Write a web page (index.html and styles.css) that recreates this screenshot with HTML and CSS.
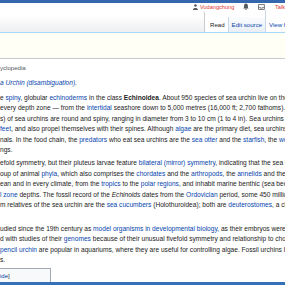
FILE: index.html
```html
<!DOCTYPE html>
<html lang="en">
<head>
    <meta charset="UTF-8">
    <meta name="viewport" content="width=device-width, initial-scale=1.0">
    <title>Sea urchin - Wikipedia</title>
    <link rel="stylesheet" href="styles.css">
</head>
<body>
    <div class="topbar"></div>

    <div class="header">
        <div class="usernav">
            <svg class="icon-user" width="5" height="6" viewBox="0 0 10 12">
                <circle cx="5" cy="3" r="2.6" fill="#54595d"/>
                <path d="M0 12 C0 7 10 7 10 12 Z" fill="#54595d"/>
            </svg>
            <a class="new username" href="#">Vudangchung</a>
            <svg class="icon-bell" width="6" height="7" viewBox="0 0 12 14">
                <path d="M6 1 C3 1 2 4 2 6 L2 9 L0.5 11 L11.5 11 L10 9 L10 6 C10 4 9 1 6 1 Z" fill="#54595d"/>
                <circle cx="6" cy="12.5" r="1.4" fill="#54595d"/>
            </svg>
            <svg class="icon-tray" width="7" height="6" viewBox="0 0 14 12">
                <path d="M1 1 L13 1 L13 11 L1 11 Z" fill="none" stroke="#54595d" stroke-width="1.6"/>
                <path d="M1 7 L5 7 L5 8.5 L9 8.5 L9 7 L13 7" fill="none" stroke="#54595d" stroke-width="1.4"/>
            </svg>
            <a class="new talk" href="#">Talk</a>
        </div>
        <div class="views">
            <div class="ns-box"></div>
            <div class="tab selected">Read</div>
            <div class="tab shaded"><a href="#">Edit source</a></div>
            <div class="tab"><a href="#">View history</a></div>
        </div>
    </div>

    <div class="title"></div>

    <div class="content">
        <div class="line sitesub">yclopedia</div>
        <div class="line hatnote"><a href="#">a Urchin (disambiguation)</a>.</div>

        <div class="para">
            <div class="line">e <a href="#">spiny</a>, globular <a href="#">echinoderms</a> in the class <b>Echinoidea</b>. About 950 species of sea urchin live on the seabed</div>
            <div class="line">every depth zone — from the <a href="#">intertidal</a> seashore down to 5,000 metres (16,000 ft; 2,700 fathoms).<sup><a href="#">[1]</a></sup> The</div>
            <div class="line">s) of sea urchins are round and spiny, ranging in diameter from 3 to 10 cm (1 to 4 in). Sea urchins move</div>
            <div class="line"><a href="#">feet</a>, and also propel themselves with their spines. Although <a href="#">algae</a> are the primary diet, sea urchins also</div>
            <div class="line">nals. In the food chain, the <a href="#">predators</a> who eat sea urchins are the <a href="#">sea otter</a> and the <a href="#">starfish</a>, the <a href="#">wolf eel</a></div>
            <div class="line">ngs.</div>
        </div>

        <div class="para">
            <div class="line">efold symmetry, but their pluteus larvae feature <a href="#">bilateral (mirror) symmetry</a>, indicating that the sea urchin</div>
            <div class="line">oup of animal <a href="#">phyla</a>, which also comprises the <a href="#">chordates</a> and the <a href="#">arthropods</a>, the <a href="#">annelids</a> and the <a href="#">molluscs</a></div>
            <div class="line">ean and in every climate, from the <a href="#">tropics</a> to the <a href="#">polar regions</a>, and inhabit marine benthic (sea bed) habitats</div>
            <div class="line"><a href="#">l zone</a> depths. The fossil record of the <i>Echinoids</i> dates from the <a href="#">Ordovician</a> period, some 450 million years</div>
            <div class="line">m relatives of the sea urchin are the <a href="#">sea cucumbers</a> (Holothuroidea); both are <a href="#">deuterostomes</a>, a clade</div>
            <div class="line">&nbsp;</div>
        </div>

        <div class="para">
            <div class="line">udied since the 19th century as <a href="#">model organisms in developmental biology</a>, as their embryos were easily</div>
            <div class="line">d with studies of their <a href="#">genomes</a> because of their unusual fivefold symmetry and relationship to chordates</div>
            <div class="line"><a href="#">pencil urchin</a> are popular in aquariums, where they are useful for controlling algae. Fossil urchins have</div>
            <div class="line">s.</div>
        </div>

        <div class="toc">
            <div class="toc-title"><a href="#">ide</a>]</div>
        </div>
    </div>

    <div class="bottombar"></div>
</body>
</html>
```

FILE: styles.css
```css
html, body {
    overflow: hidden;
}
body {
    margin: 0;
    font-family: "Liberation Sans", Arial, sans-serif;
    color: #222;
    background-color: #fff;
}
a {
    color: #0645ad;
    text-decoration: none;
}
a.new {
    color: #d33;
}

.topbar {
    height: 3px;
    background-color: #3467ad;
}
.bottombar {
    position: fixed;
    left: 0;
    right: 0;
    bottom: 0;
    height: 3px;
    background-color: #3571b8;
}

/* header: personal tools + view tabs */
.header {
    height: 29px;
    border-bottom: 1px solid #a7d7f9;
}
.usernav {
    display: flex;
    align-items: center;
    height: 7px;
    padding-left: 193px;
    font-size: 5.6px;
    white-space: nowrap;
}
.usernav .username {
    margin-left: 2px;
}
.icon-bell {
    margin-left: 9px;
}
.icon-tray {
    margin-left: 9px;
}
.usernav .talk {
    margin-left: 10px;
}
.views {
    display: flex;
    height: 22px;
    font-size: 6.1px;
    white-space: nowrap;
}
.ns-box {
    flex: 0 0 204px;
    margin-top: 1px;
    border-right: 1px solid #c8ccd1;
    border-top-right-radius: 3px;
    background: linear-gradient(#fff 20%, #eeeff0);
}
.tab {
    display: flex;
    align-items: flex-end;
    padding: 0 3px 4px;
}
.tab + .tab {
    border-left: 1px solid #c9d8ea;
}
.tab.selected {
    padding-left: 5px;
    background-color: #fff;
}
.tab.shaded {
    margin-top: 7px;
    background: linear-gradient(#fbfcfd, #e9eff6);
}

.title {
    height: 25px;
    background-color: #fffff6;
    border-bottom: 1px solid #c8ccd1;
}

/* article body */
.content {
    font-size: 6.6px;
    line-height: 10.5px;
}
.line {
    white-space: nowrap;
}
.sitesub {
    margin-top: 3.5px;
    font-size: 6.1px;
    color: #54595d;
}
.hatnote {
    margin-top: 4.5px;
    font-style: italic;
}
.para {
    margin-top: 4.5px;
}
.para + .para {
    margin-top: 2.5px;
}
sup {
    font-size: 75%;
    line-height: 0;
}

.toc {
    margin-top: 2.5px;
    width: 50px;
    padding: 2px 0 8px;
    border: 1px solid #a2a9b1;
    border-left: 0;
    background-color: #f8f9fa;
    font-size: 6px;
    line-height: 10px;
}
```
